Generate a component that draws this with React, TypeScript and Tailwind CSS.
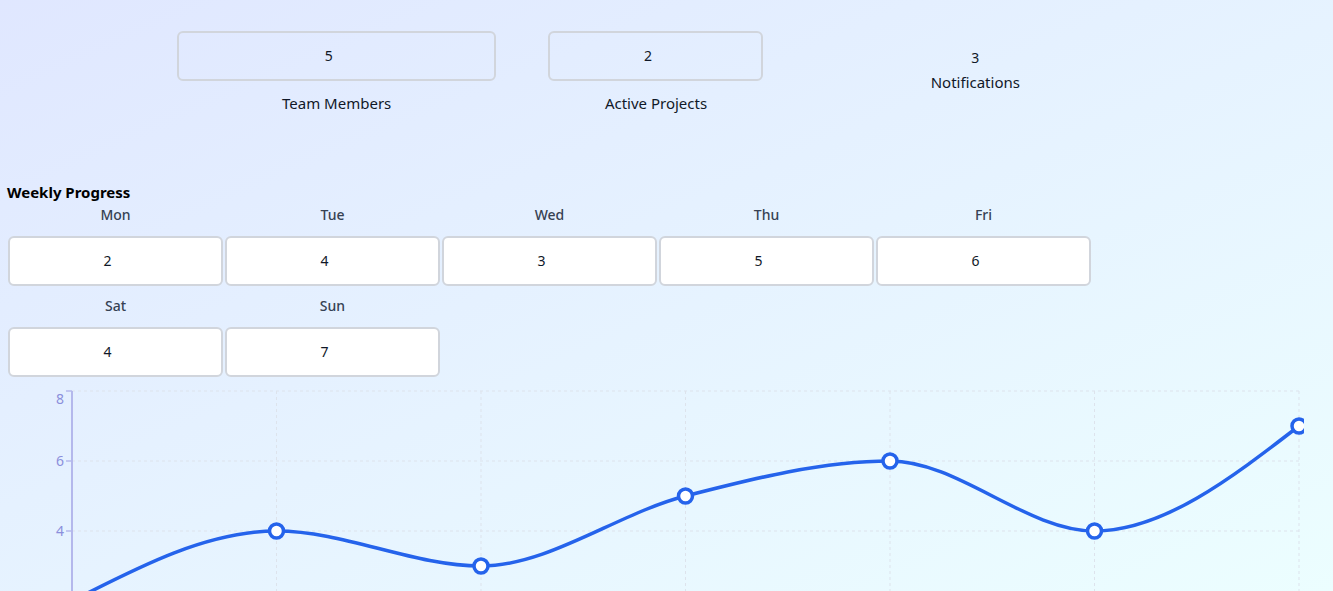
import React from "react";

type Day = { day: string; tasks: number };

const week: Day[] = [
  { day: "Mon", tasks: 2 },
  { day: "Tue", tasks: 4 },
  { day: "Wed", tasks: 3 },
  { day: "Thu", tasks: 5 },
  { day: "Fri", tasks: 6 },
  { day: "Sat", tasks: 4 },
  { day: "Sun", tasks: 7 },
];

// chart geometry (svg coords)
const LEFT = 72;
const RIGHT = 1299;
const TOP = 10;
const UNIT = 35; // px per task
const yOf = (v: number) => TOP + (8 - v) * UNIT;
const xOf = (i: number) => LEFT + (i * (RIGHT - LEFT)) / (week.length - 1);

// monotone-x curve, same maths as d3's curveMonotoneX
function monotonePath(pts: [number, number][]) {
  const n = pts.length;
  const h: number[] = [];
  const s: number[] = [];
  for (let i = 0; i < n - 1; i++) {
    h[i] = pts[i + 1][0] - pts[i][0];
    s[i] = (pts[i + 1][1] - pts[i][1]) / h[i];
  }
  const t: number[] = [];
  for (let i = 1; i < n - 1; i++) {
    const p = (s[i - 1] * h[i] + s[i] * h[i - 1]) / (h[i - 1] + h[i]);
    t[i] =
      (Math.sign(s[i - 1]) + Math.sign(s[i])) *
        Math.min(Math.abs(s[i - 1]), Math.abs(s[i]), 0.5 * Math.abs(p)) || 0;
  }
  t[0] = (3 * s[0] - t[1]) / 2;
  t[n - 1] = (3 * s[n - 2] - t[n - 2]) / 2;
  let d = `M${pts[0][0]},${pts[0][1]}`;
  for (let i = 0; i < n - 1; i++) {
    const dx = h[i] / 3;
    d += ` C${pts[i][0] + dx},${pts[i][1] + dx * t[i]} ${pts[i + 1][0] - dx},${pts[i + 1][1] - dx * t[i + 1]} ${pts[i + 1][0]},${pts[i + 1][1]}`;
  }
  return d;
}

function ProgressChart() {
  const pts = week.map((d, i) => [xOf(i), yOf(d.tasks)] as [number, number]);
  const grid = [8, 6, 4, 2, 0];
  const labels = [8, 6, 4]; // the rest sit below the fold
  return (
    <svg width={1304} height={210} className="block mt-[4px]">
      {/* grid */}
      {grid.map((v) => (
        <line key={v} x1={LEFT} x2={RIGHT} y1={yOf(v)} y2={yOf(v)} stroke="#dde3ec" strokeDasharray="3 3" />
      ))}
      {week.map((d, i) => (
        <line key={d.day} x1={xOf(i)} x2={xOf(i)} y1={TOP} y2={300} stroke="#dde3ec" strokeDasharray="3 3" />
      ))}
      {/* y axis */}
      <line x1={LEFT} x2={LEFT} y1={TOP} y2={300} stroke="#b4b8ec" strokeWidth={2} />
      {labels.map((v) => (
        <g key={v}>
          <line x1={LEFT - 6} x2={LEFT} y1={yOf(v)} y2={yOf(v)} stroke="#b4b8ec" strokeWidth={1.5} />
          <text
            x={LEFT - 8}
            y={v === 8 ? yOf(v) + 8 : yOf(v)}
            dy="0.355em"
            textAnchor="end"
            fontSize={14}
            fill="#8b8fdc"
          >
            {v}
          </text>
        </g>
      ))}
      {/* line */}
      <path d={monotonePath(pts)} fill="none" stroke="#2563eb" strokeWidth={3.5} />
      {pts.map(([x, y], i) => (
        <circle key={i} cx={x} cy={y} r={7} fill="#fff" stroke="#2563eb" strokeWidth={3.5} />
      ))}
    </svg>
  );
}

export default function App() {
  return (
    <div
      className="h-screen overflow-hidden bg-gradient-to-br from-indigo-100 to-cyan-50 text-gray-900"
      style={{ fontFamily: '"Noto Sans", "Open Sans", sans-serif' }}
    >
      {/* stats */}
      <div className="ml-[177px] w-[958px] grid grid-cols-3 items-center pt-[31px]">
        <div className="flex flex-col items-center">
          <div className="w-full h-[50px] border-2 border-gray-300 rounded-md flex items-center justify-center pr-4 text-sm">
            5
          </div>
          <div className="mt-[12px] text-[15px] leading-5">Team Members</div>
        </div>
        <div className="flex flex-col items-center">
          <div className="w-[215px] h-[50px] border-2 border-gray-300 rounded-md flex items-center justify-center pr-4 text-sm">
            2
          </div>
          <div className="mt-[12px] text-[15px] leading-5">Active Projects</div>
        </div>
        <div className="flex flex-col items-center mb-[4px]">
          <div className="text-sm leading-5">3</div>
          <div className="mt-[4px] text-[15px] leading-5">Notifications</div>
        </div>
      </div>

      {/* weekly progress */}
      <div className="mt-[69px] px-[7px]">
        <h2 className="text-[15px] leading-5 font-bold text-black">Weekly Progress</h2>
        <div className="mt-[3px] grid grid-cols-[repeat(5,215px)] gap-x-[2px] gap-y-[10px] pl-[1px]">
          {week.map((d) => (
            <div key={d.day} className="flex flex-col">
              <div className="text-sm leading-5 font-medium text-gray-700 text-center">{d.day}</div>
              <div className="mt-[11px] h-[50px] bg-white border-2 border-gray-300 rounded-md flex items-center justify-center pr-4 text-sm">
                {d.tasks}
              </div>
            </div>
          ))}
        </div>
      </div>

      <ProgressChart />
    </div>
  );
}
